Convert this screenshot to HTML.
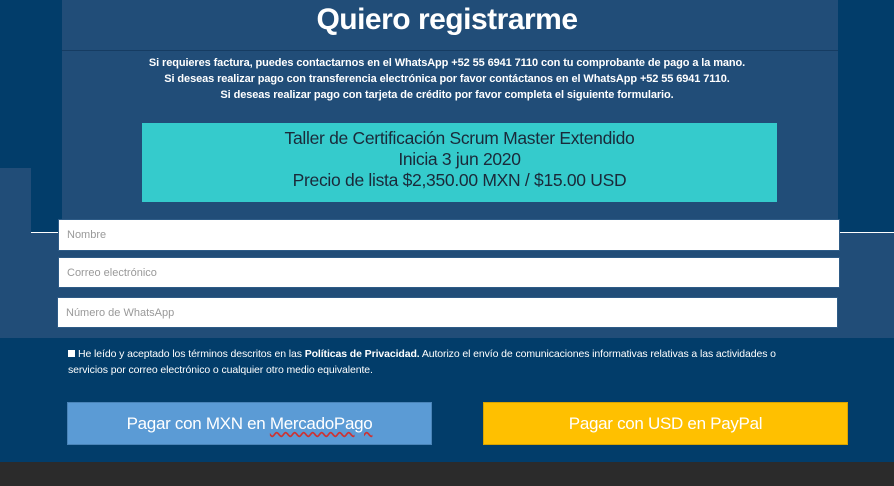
<!DOCTYPE html>
<html><head><meta charset="utf-8"><style>
*{margin:0;padding:0;box-sizing:border-box}
body{width:894px;height:486px;overflow:hidden;background:#023d6a;font-family:"Liberation Sans",sans-serif;position:relative}
.abs{position:absolute}
.t{color:#fff;text-align:center;white-space:nowrap}
.inp{position:absolute;background:#fff;border:1px solid #2e5b86;color:#999;font-size:11px;padding-left:8px;display:flex;align-items:center}
.btn{position:absolute;height:43px;width:365px;display:flex;align-items:center;justify-content:center;color:#fff;font-size:17px;letter-spacing:-0.3px}
</style></head><body>
<div class="abs" style="left:0;top:232px;width:894px;height:106px;background:#214d78"></div>
<div class="abs" style="left:0;top:168px;width:31px;height:70px;background:#214d78"></div>
<div class="abs" style="left:62px;top:0;width:776px;height:232px;background:#214d78"></div>
<div class="abs" style="left:62px;top:50px;width:776px;height:1px;background:#163c62"></div>
<div class="abs" style="left:31px;top:232px;width:30px;height:1px;background:#fff"></div>
<div class="abs" style="left:838px;top:232px;width:56px;height:1px;background:#fff"></div>
<div class="abs t" style="left:0;width:894px;top:3px;font-size:30px;font-weight:bold;letter-spacing:-0.5px">Quiero registrarme</div>
<div class="abs t" style="left:0;width:894px;top:55px;font-size:11px;line-height:16px;letter-spacing:-0.1px;font-weight:bold">Si requieres factura, puedes contactarnos en el WhatsApp +52 55 6941 7110 con tu comprobante de pago a la mano.<br>Si deseas realizar pago con transferencia electrónica por favor contáctanos en el WhatsApp +52 55 6941 7110.<br>Si deseas realizar pago con tarjeta de crédito por favor completa el siguiente formulario.</div>
<div class="abs" style="left:142px;top:123px;width:635px;height:79px;background:#35cbcc;color:#1a2a3a;text-align:center;font-size:17.5px;line-height:21px;padding-top:5px;letter-spacing:-0.3px">Taller de Certificación Scrum Master Extendido<br>Inicia 3 jun 2020<br>Precio de lista $2,350.00 MXN / $15.00 USD</div>
<div class="inp" style="left:58px;top:219px;width:782px;height:32px">Nombre</div>
<div class="inp" style="left:58px;top:257px;width:782px;height:31px">Correo electrónico</div>
<div class="inp" style="left:57px;top:297px;width:781px;height:31px">Número de WhatsApp</div>
<div class="abs" style="left:68px;top:346px;width:745px;color:#fff;font-size:10.5px;line-height:16px;letter-spacing:-0.1px"><span style="display:inline-block;width:7px;height:7px;background:#fff;margin-right:3px"></span>He leído y aceptado los términos descritos en las <b>Políticas de Privacidad.</b> Autorizo el envío de comunicaciones informativas relativas a las actividades o servicios por correo electrónico o cualquier otro medio equivalente.</div>
<div class="btn" style="left:67px;top:402px;background:#5b9bd5;border:1px solid #4a84b8">Pagar con MXN en&nbsp;<span style="text-decoration:underline wavy #c33;text-underline-offset:3px">MercadoPago</span></div>
<div class="btn" style="left:483px;top:402px;background:#ffc000;border:1px solid #d9a300">Pagar con USD en PayPal</div>
<div class="abs" style="left:0;top:462px;width:894px;height:24px;background:#2b2b2b"></div>
</body></html>
